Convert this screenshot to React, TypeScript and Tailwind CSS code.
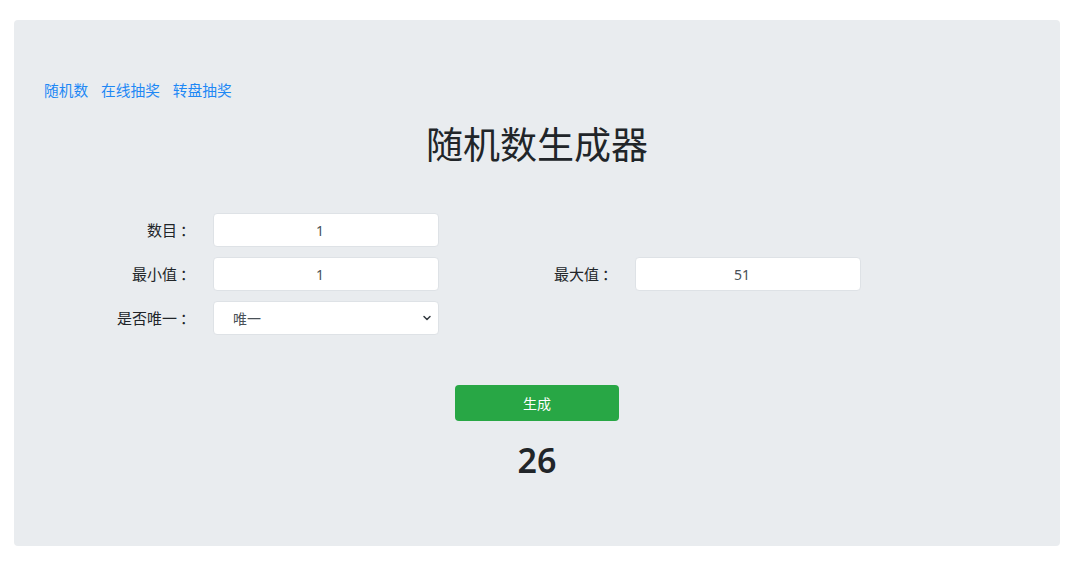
import { ChevronDown } from "lucide-react";

const font = {
  fontFamily: '"Noto Sans", "Noto Sans CJK SC", sans-serif',
};

function Field({ label, children }: { label: string; children: React.ReactNode }) {
  return (
    <div className="w-[422px] flex items-center">
      <label className="w-[105px] pr-[18px] text-right text-[15px] text-[#212529] whitespace-nowrap">
        {label}
        <span className="ml-[3px]">：</span>
      </label>
      {children}
    </div>
  );
}

function TextInput({ value }: { value: string }) {
  return (
    <input
      defaultValue={value}
      className="w-[226px] h-[34px] bg-white border border-[#dee2e6] rounded-[4px] pr-[12px] text-center text-[14px] text-[#495057] outline-none"
    />
  );
}

export default function App() {
  return (
    <div className="min-h-screen bg-white pt-[20px] pl-[14px] pr-[20px]" style={font}>
      <div className="h-[526px] bg-[#e9ecef] rounded-[4px] pt-[60px]">
        {/* nav links */}
        <div className="pl-[30px] flex gap-[13px] text-[14.7px] leading-[21px] text-[#1e88f5]">
          <a href="#">随机数</a>
          <a href="#">在线抽奖</a>
          <a href="#">转盘抽奖</a>
        </div>

        <h1 className="mt-[22px] text-center text-[37px] leading-[43px] text-[#212529]">随机数生成器</h1>

        {/* form */}
        <div className="mt-[47px] pl-[94px] flex flex-col gap-[10px]">
          <div className="flex">
            <Field label="数目">
              <TextInput value="1" />
            </Field>
          </div>
          <div className="flex">
            <Field label="最小值">
              <TextInput value="1" />
            </Field>
            <Field label="最大值">
              <TextInput value="51" />
            </Field>
          </div>
          <div className="flex">
            <Field label="是否唯一">
              <div className="relative w-[226px] h-[34px]">
                <select className="appearance-none w-full h-full bg-white border border-[#dee2e6] rounded-[4px] pl-[19px] text-[14px] text-[#495057] outline-none">
                  <option>唯一</option>
                  <option>不唯一</option>
                </select>
                <ChevronDown
                  size={12}
                  strokeWidth={3}
                  className="absolute right-[6px] top-[11px] text-[#343a40] pointer-events-none"
                />
              </div>
            </Field>
          </div>
        </div>

        <div className="mt-[50px] flex flex-col items-center">
          <button className="w-[164px] h-[36px] bg-[#28a745] rounded-[4px] text-white text-[14px]">生成</button>
          <div className="mt-[19px] text-[34px] leading-[40px] font-semibold text-[#212529]">26</div>
        </div>
      </div>
    </div>
  );
}
